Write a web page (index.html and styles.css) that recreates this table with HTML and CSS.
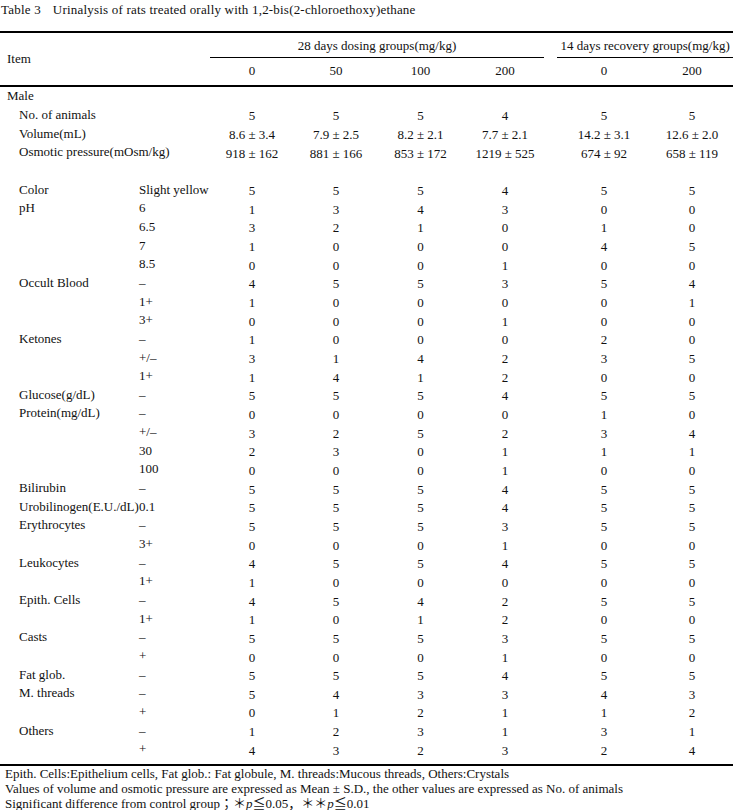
FILE: index.html
```html
<!DOCTYPE html>
<html lang="en">
<head>
<meta charset="utf-8">
<title>Table 3 Urinalysis</title>
<link rel="stylesheet" href="styles.css">
</head>
<body>
<h1 class="title"><span class="num">Table 3</span>Urinalysis of rats treated orally with 1,2-bis(2-chloroethoxy)ethane</h1>
<table class="urine">
  <colgroup>
    <col class="c-l1"><col class="c-l2">
    <col class="c-d"><col class="c-d"><col class="c-d2"><col class="c-d">
    <col class="c-gap">
    <col class="c-r1"><col class="c-r2">
  </colgroup>
  <thead>
    <tr class="groups">
      <th class="item" colspan="2" rowspan="2">Item</th>
      <th class="group dosing" colspan="4"><div class="label">28 days dosing groups(mg/kg)</div></th>
      <th class="gap" rowspan="2"></th>
      <th class="group recovery" colspan="2"><div class="label">14 days recovery groups(mg/kg)</div></th>
    </tr>
    <tr class="doses">
      <th>0</th><th>50</th><th>100</th><th>200</th>
      <th>0</th><th>200</th>
    </tr>
  </thead>
  <tbody>
    <tr><td class="l1 sex" colspan="2">Male</td><td class="v"></td><td class="v"></td><td class="v"></td><td class="v"></td><td></td><td class="v"></td><td class="v"></td></tr>
    <tr><td class="l1" colspan="2">No. of animals</td><td class="v">5</td><td class="v">5</td><td class="v">5</td><td class="v">4</td><td></td><td class="v">5</td><td class="v">5</td></tr>
    <tr><td class="l1" colspan="2">Volume(mL)</td><td class="v">8.6 ± 3.4</td><td class="v">7.9 ± 2.5</td><td class="v">8.2 ± 2.1</td><td class="v">7.7 ± 2.1</td><td></td><td class="v">14.2 ± 3.1</td><td class="v">12.6 ± 2.0</td></tr>
    <tr><td class="l1" colspan="2">Osmotic pressure(mOsm/kg)</td><td class="v">918 ± 162</td><td class="v">881 ± 166</td><td class="v">853 ± 172</td><td class="v">1219 ± 525</td><td></td><td class="v">674 ± 92</td><td class="v">658 ± 119</td></tr>
    <tr><td class="l1" colspan="2"></td><td class="v"></td><td class="v"></td><td class="v"></td><td class="v"></td><td></td><td class="v"></td><td class="v"></td></tr>
    <tr><td class="l1">Color</td><td class="l2">Slight yellow</td><td class="v">5</td><td class="v">5</td><td class="v">5</td><td class="v">4</td><td></td><td class="v">5</td><td class="v">5</td></tr>
    <tr><td class="l1">pH</td><td class="l2">6</td><td class="v">1</td><td class="v">3</td><td class="v">4</td><td class="v">3</td><td></td><td class="v">0</td><td class="v">0</td></tr>
    <tr><td class="l1"></td><td class="l2">6.5</td><td class="v">3</td><td class="v">2</td><td class="v">1</td><td class="v">0</td><td></td><td class="v">1</td><td class="v">0</td></tr>
    <tr><td class="l1"></td><td class="l2">7</td><td class="v">1</td><td class="v">0</td><td class="v">0</td><td class="v">0</td><td></td><td class="v">4</td><td class="v">5</td></tr>
    <tr><td class="l1"></td><td class="l2">8.5</td><td class="v">0</td><td class="v">0</td><td class="v">0</td><td class="v">1</td><td></td><td class="v">0</td><td class="v">0</td></tr>
    <tr><td class="l1">Occult Blood</td><td class="l2">–</td><td class="v">4</td><td class="v">5</td><td class="v">5</td><td class="v">3</td><td></td><td class="v">5</td><td class="v">4</td></tr>
    <tr><td class="l1"></td><td class="l2">1+</td><td class="v">1</td><td class="v">0</td><td class="v">0</td><td class="v">0</td><td></td><td class="v">0</td><td class="v">1</td></tr>
    <tr><td class="l1"></td><td class="l2">3+</td><td class="v">0</td><td class="v">0</td><td class="v">0</td><td class="v">1</td><td></td><td class="v">0</td><td class="v">0</td></tr>
    <tr><td class="l1">Ketones</td><td class="l2">–</td><td class="v">1</td><td class="v">0</td><td class="v">0</td><td class="v">0</td><td></td><td class="v">2</td><td class="v">0</td></tr>
    <tr><td class="l1"></td><td class="l2">+/–</td><td class="v">3</td><td class="v">1</td><td class="v">4</td><td class="v">2</td><td></td><td class="v">3</td><td class="v">5</td></tr>
    <tr><td class="l1"></td><td class="l2">1+</td><td class="v">1</td><td class="v">4</td><td class="v">1</td><td class="v">2</td><td></td><td class="v">0</td><td class="v">0</td></tr>
    <tr><td class="l1">Glucose(g/dL)</td><td class="l2">–</td><td class="v">5</td><td class="v">5</td><td class="v">5</td><td class="v">4</td><td></td><td class="v">5</td><td class="v">5</td></tr>
    <tr><td class="l1">Protein(mg/dL)</td><td class="l2">–</td><td class="v">0</td><td class="v">0</td><td class="v">0</td><td class="v">0</td><td></td><td class="v">1</td><td class="v">0</td></tr>
    <tr><td class="l1"></td><td class="l2">+/–</td><td class="v">3</td><td class="v">2</td><td class="v">5</td><td class="v">2</td><td></td><td class="v">3</td><td class="v">4</td></tr>
    <tr><td class="l1"></td><td class="l2">30</td><td class="v">2</td><td class="v">3</td><td class="v">0</td><td class="v">1</td><td></td><td class="v">1</td><td class="v">1</td></tr>
    <tr><td class="l1"></td><td class="l2">100</td><td class="v">0</td><td class="v">0</td><td class="v">0</td><td class="v">1</td><td></td><td class="v">0</td><td class="v">0</td></tr>
    <tr><td class="l1">Bilirubin</td><td class="l2">–</td><td class="v">5</td><td class="v">5</td><td class="v">5</td><td class="v">4</td><td></td><td class="v">5</td><td class="v">5</td></tr>
    <tr><td class="l1">Urobilinogen(E.U./dL)</td><td class="l2">0.1</td><td class="v">5</td><td class="v">5</td><td class="v">5</td><td class="v">4</td><td></td><td class="v">5</td><td class="v">5</td></tr>
    <tr><td class="l1">Erythrocytes</td><td class="l2">–</td><td class="v">5</td><td class="v">5</td><td class="v">5</td><td class="v">3</td><td></td><td class="v">5</td><td class="v">5</td></tr>
    <tr><td class="l1"></td><td class="l2">3+</td><td class="v">0</td><td class="v">0</td><td class="v">0</td><td class="v">1</td><td></td><td class="v">0</td><td class="v">0</td></tr>
    <tr><td class="l1">Leukocytes</td><td class="l2">–</td><td class="v">4</td><td class="v">5</td><td class="v">5</td><td class="v">4</td><td></td><td class="v">5</td><td class="v">5</td></tr>
    <tr><td class="l1"></td><td class="l2">1+</td><td class="v">1</td><td class="v">0</td><td class="v">0</td><td class="v">0</td><td></td><td class="v">0</td><td class="v">0</td></tr>
    <tr><td class="l1">Epith. Cells</td><td class="l2">–</td><td class="v">4</td><td class="v">5</td><td class="v">4</td><td class="v">2</td><td></td><td class="v">5</td><td class="v">5</td></tr>
    <tr><td class="l1"></td><td class="l2">1+</td><td class="v">1</td><td class="v">0</td><td class="v">1</td><td class="v">2</td><td></td><td class="v">0</td><td class="v">0</td></tr>
    <tr><td class="l1">Casts</td><td class="l2">–</td><td class="v">5</td><td class="v">5</td><td class="v">5</td><td class="v">3</td><td></td><td class="v">5</td><td class="v">5</td></tr>
    <tr><td class="l1"></td><td class="l2">+</td><td class="v">0</td><td class="v">0</td><td class="v">0</td><td class="v">1</td><td></td><td class="v">0</td><td class="v">0</td></tr>
    <tr><td class="l1">Fat glob.</td><td class="l2">–</td><td class="v">5</td><td class="v">5</td><td class="v">5</td><td class="v">4</td><td></td><td class="v">5</td><td class="v">5</td></tr>
    <tr><td class="l1">M. threads</td><td class="l2">–</td><td class="v">5</td><td class="v">4</td><td class="v">3</td><td class="v">3</td><td></td><td class="v">4</td><td class="v">3</td></tr>
    <tr><td class="l1"></td><td class="l2">+</td><td class="v">0</td><td class="v">1</td><td class="v">2</td><td class="v">1</td><td></td><td class="v">1</td><td class="v">2</td></tr>
    <tr><td class="l1">Others</td><td class="l2">–</td><td class="v">1</td><td class="v">2</td><td class="v">3</td><td class="v">1</td><td></td><td class="v">3</td><td class="v">1</td></tr>
    <tr><td class="l1"></td><td class="l2">+</td><td class="v">4</td><td class="v">3</td><td class="v">2</td><td class="v">3</td><td></td><td class="v">2</td><td class="v">4</td></tr>
  </tbody>
</table>
<div class="notes">
  <p>Epith. Cells:Epithelium cells, Fat glob.: Fat globule, M. threads:Mucous threads, Others:Crystals</p>
  <p>Values of volume and osmotic pressure are expressed as Mean ± S.D., the other values are expressed as No. of animals</p>
  <p>Significant difference from control group；＊<i>p</i>≦0.05，＊＊<i>p</i>≦0.01</p>
</div>
</body>
</html>
```
FILE: styles.css
```css
html, body {
  margin: 0;
  background: #fff;
}
body {
  width: 733px;
  font-family: "Liberation Serif", "Times New Roman", "Noto Sans CJK JP", serif;
  font-size: 13px;
  color: #111;
}
.title {
  margin: 0 0 11px 1px;
  height: 20px;
  line-height: 20px;
  font-size: 13px;
  font-weight: normal;
  letter-spacing: 0.2px;
  white-space: nowrap;
}
.title .num {
  margin-right: 12px;
}
.urine {
  width: 733px;
  table-layout: fixed;
  border-collapse: separate;
  border-spacing: 0;
  border-top: 2px solid #000;
  border-bottom: 2px solid #000;
  padding-bottom: 5px;
}
.c-l1 { width: 139px; }
.c-l2 { width: 71px; }
.c-d { width: 84px; }
.c-d2 { width: 85px; }
.c-gap { width: 10px; }
.c-r1 { width: 94px; }
.c-r2 { width: 82px; }
.urine th {
  font-weight: normal;
  padding: 0;
  line-height: 14px;
  white-space: nowrap;
}
.urine th.item {
  text-align: left;
  padding-left: 7px;
  vertical-align: middle;
  border-bottom: 2px solid #000;
}
.urine th.group {
  vertical-align: bottom;
}
.group .label {
  padding: 6px 0 4px;
  border-bottom: 1px solid #000;
  text-align: center;
}
.dosing .label {
  margin-right: 3px;
}
.urine th.gap {
  border-bottom: 2px solid #000;
}
.doses th {
  padding: 6px 0 7px;
  text-align: center;
  border-bottom: 2px solid #000;
}
.urine tbody tr {
  height: 18.667px;
}
.urine td {
  padding: 0;
  line-height: 14px;
  vertical-align: middle;
  white-space: nowrap;
}
.urine td.l1 {
  padding-left: 19px;
}
.urine td.l1.sex {
  padding-left: 7px;
}
.urine td.v {
  text-align: center;
  padding-top: 3px;
}
.notes {
  padding-left: 5px;
  font-size: 13px;
  line-height: 15px;
}
.notes p {
  margin: 0;
  white-space: nowrap;
}
```
